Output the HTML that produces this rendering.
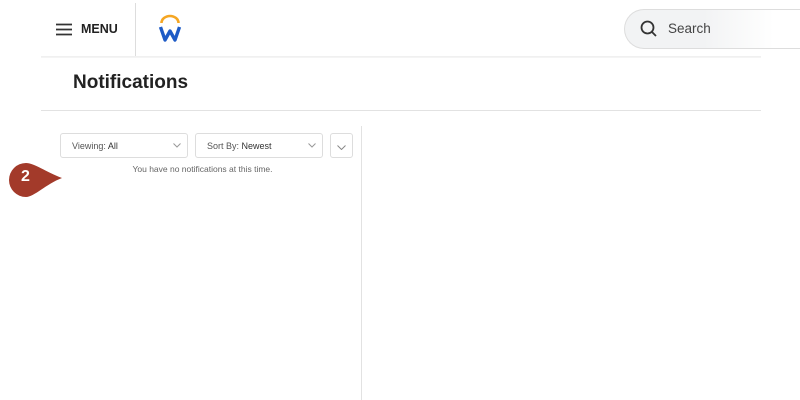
<!DOCTYPE html>
<html><head><meta charset="utf-8"><style>
*{margin:0;padding:0;box-sizing:border-box}
body{width:800px;height:400px;background:#fff;font-family:"Liberation Sans",sans-serif;position:relative;overflow:hidden;color:#333}
.abs{position:absolute}
</style></head><body>
<svg class="abs" style="left:56px;top:23px" width="16" height="13" viewBox="0 0 16 13"><path d="M0 1.5H16M0 6.5H16M0 11.5H16" stroke="#333" stroke-width="1.8"/></svg>
<div class="abs" style="left:81px;top:22px;font-size:12.5px;font-weight:bold;color:#222">MENU</div>
<div class="abs" style="left:135px;top:3px;width:1px;height:53px;background:#ddd"></div>
<svg class="abs" style="left:158px;top:14px" width="24" height="28" viewBox="0 0 24 28">
<path d="M3.5 9 A8.5 7 0 0 1 20.5 9" fill="none" stroke="#f5a623" stroke-width="2.6"/>
<path d="M2.5 13 L7 26 L12 17 L17 26 L21.5 13" fill="none" stroke="#1e5bc6" stroke-width="3.4" stroke-linejoin="round"/>
</svg>
<div class="abs" style="left:41px;top:56px;width:720px;height:2px;background:linear-gradient(#eee,#f6f6f6)"></div>
<div class="abs" style="left:624px;top:9px;width:176px;height:40px;border-radius:20px 0 0 20px;border:1px solid #ddd;border-right:none;background:linear-gradient(90deg,#f2f3f4 45%,#fff 85%)"></div>
<svg class="abs" style="left:640px;top:20px" width="18" height="18" viewBox="0 0 18 18"><circle cx="7.5" cy="7.5" r="6" fill="none" stroke="#333" stroke-width="1.8"/><path d="M12 12L16 16" stroke="#333" stroke-width="1.8"/></svg>
<div class="abs" style="left:668px;top:21px;font-size:13.5px;color:#444">Search</div>
<div class="abs" style="left:73px;top:72px;font-size:19px;font-weight:bold;color:#222">Notifications</div>
<div class="abs" style="left:41px;top:110px;width:720px;height:1px;background:#e2e2e2"></div>
<div class="abs" style="left:361px;top:126px;width:1px;height:274px;background:#e2e2e2"></div>
<div class="abs" style="left:60px;top:133px;width:128px;height:25px;border:1px solid #ddd;border-radius:3px;font-size:9px;padding:7px 0 0 11px;color:#555">Viewing: <span style="color:#333">All</span></div>
<svg class="abs" style="left:173px;top:143px" width="8" height="5" viewBox="0 0 8 5"><path d="M0.5 0.5L4 4L7.5 0.5" fill="none" stroke="#999"/></svg>
<div class="abs" style="left:195px;top:133px;width:128px;height:25px;border:1px solid #ddd;border-radius:3px;font-size:9px;padding:7px 0 0 11px;color:#555">Sort By: <span style="color:#333">Newest</span></div>
<svg class="abs" style="left:308px;top:143px" width="8" height="5" viewBox="0 0 8 5"><path d="M0.5 0.5L4 4L7.5 0.5" fill="none" stroke="#999"/></svg>
<div class="abs" style="left:330px;top:133px;width:23px;height:25px;border:1px solid #ddd;border-radius:3px"></div>
<svg class="abs" style="left:337px;top:145px" width="9" height="5" viewBox="0 0 9 5"><path d="M0.5 0.5L4.5 4.5L8.5 0.5" fill="none" stroke="#888"/></svg>
<div class="abs" style="left:60px;top:164px;width:285px;text-align:center;font-size:8.5px;color:#666">You have no notifications at this time.</div>
<svg class="abs" style="left:8px;top:162px" width="56" height="36" viewBox="0 0 56 36"><path d="M18 1 C26 1 38 10 54 16 C38 22 26 35 18 35 A17 17 0 0 1 18 1Z" fill="#a33a2a"/></svg>
<div class="abs" style="left:21px;top:168px;font-size:16px;font-weight:bold;color:#fff">2</div>
</body></html>
